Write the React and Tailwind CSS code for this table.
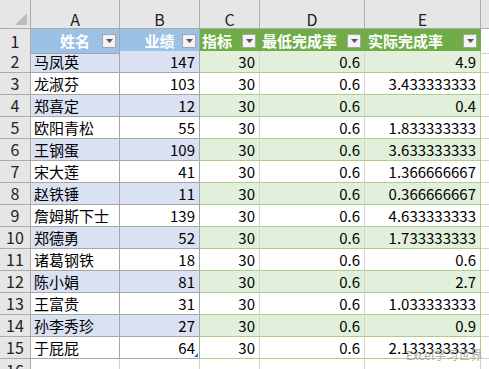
import React from 'react';

const rows = [
  ['马凤英', 147, '4.9'],
  ['龙淑芬', 103, '3.433333333'],
  ['郑喜定', 12, '0.4'],
  ['欧阳青松', 55, '1.833333333'],
  ['王钢蛋', 109, '3.633333333'],
  ['宋大莲', 41, '1.366666667'],
  ['赵铁锤', 11, '0.366666667'],
  ['詹姆斯下士', 139, '4.633333333'],
  ['郑德勇', 52, '1.733333333'],
  ['诸葛钢铁', 18, '0.6'],
  ['陈小娟', 81, '2.7'],
  ['王富贵', 31, '1.033333333'],
  ['孙李秀珍', 27, '0.9'],
  ['于屁屁', 64, '2.133333333'],
];

const cols = 'grid grid-cols-[31px_89px_80px_60px_105px_116px_1fr]';

const FilterBtn = () => (
  <span className="ml-auto mr-[3px] flex h-[14px] w-[14px] shrink-0 items-center justify-center border border-[#a6a6a6] bg-[#f3f3f3]">
    <svg width="7" height="4" viewBox="0 0 7 4">
      <path d="M0 0h7L3.5 4z" fill="#555" />
    </svg>
  </span>
);

const App = () => {
  return (
    <div
      className="relative h-[369px] w-[489px] overflow-hidden bg-white text-[15px] text-black"
      style={{ fontFamily: '"Noto Sans CJK SC", "Liberation Sans", sans-serif' }}
    >
      {/* column letters */}
      <div className={`${cols} h-[29px] bg-[#e6e6e6] text-[16px] text-[#222]`}>
        <div className="flex items-end justify-end border-r border-b border-[#ababab] pb-[3px] pr-[3px]">
          <svg width="12" height="12" viewBox="0 0 12 12">
            <path d="M12 0V12H0z" fill="#bdbdbd" />
          </svg>
        </div>
        {['A', 'B', 'C', 'D', 'E'].map(l => (
          <div key={l} className="flex items-center justify-center border-r border-b border-[#ababab] pt-[10px] leading-[18px]">
            {l}
          </div>
        ))}
        <div className="border-b border-[#ababab]" />
      </div>

      {/* header row 1 */}
      <div className={`${cols} h-[22px] font-bold text-white`}>
        <div className="flex items-center justify-center border-r border-b border-[#ababab] bg-[#e6e6e6] text-[16px] font-normal text-[#222]">1</div>
        <div className="relative flex items-center border-r border-b border-[#a6a6a6] bg-[#9bc2e6]">
          <span className="absolute left-0 right-0 text-center">姓名</span>
          <FilterBtn />
        </div>
        <div className="relative flex items-center border-r border-b border-[#a6a6a6] bg-[#9bc2e6]">
          <span className="absolute left-0 right-0 text-center">业绩</span>
          <FilterBtn />
        </div>
        <div className="flex items-center border-r border-b border-[#70ad47] bg-[#70ad47] pl-[2px]">
          <span>指标</span>
          <FilterBtn />
        </div>
        <div className="flex items-center border-r border-b border-[#70ad47] bg-[#70ad47] pl-[2px]">
          <span>最低完成率</span>
          <FilterBtn />
        </div>
        <div className="flex items-center border-r border-b border-[#70ad47] bg-[#70ad47] pl-[3px]">
          <span>实际完成率</span>
          <FilterBtn />
        </div>
        <div className="border-b border-[#d4d4d4]" />
      </div>

      {/* data rows */}
      {rows.map(([name, score, rate], i) => {
        const even = i % 2 === 0;
        const blue = even ? 'bg-[#d9e1f2]' : 'bg-white';
        const green = even ? 'bg-[#e2efda]' : 'bg-white';
        const last = i === rows.length - 1;
        return (
          <div key={name} className={`${cols} h-[22px] leading-[21px]`}>
            <div className="flex items-center justify-center border-r border-b border-[#ababab] bg-[#e6e6e6] text-[16px] text-[#222]">{i + 2}</div>
            <div className={`border-r border-b border-[#a6a6a6] pl-[3px] ${blue}`}>{name}</div>
            <div className={`relative border-r border-b border-[#a6a6a6] pr-[4px] text-right ${blue}`}>
              {score}
              {last && (
                <svg className="absolute bottom-[1px] right-[1px]" width="4" height="4" viewBox="0 0 4 4">
                  <path d="M4 0V4H0z" fill="#2f6fbf" />
                </svg>
              )}
            </div>
            <div className={`border-r border-b border-r-[#d4d4d4] border-b-[#a9d08e] pr-[4px] text-right ${green}`}>30</div>
            <div className={`border-r border-b border-r-[#d4d4d4] border-b-[#a9d08e] pr-[4px] text-right ${green}`}>0.6</div>
            <div className={`border-r border-b border-r-[#a9d08e] border-b-[#a9d08e] pr-[4px] text-right ${green}`}>{rate}</div>
            <div className="border-b border-[#d4d4d4]" />
          </div>
        );
      })}

      {/* row 16 */}
      <div className={`${cols} h-[22px] leading-[21px]`}>
        <div className="flex items-center justify-center border-r border-[#ababab] bg-[#e6e6e6] text-[16px] text-[#222]">16</div>
        <div className="border-r border-[#d4d4d4]" />
        <div className="border-r border-[#d4d4d4]" />
        <div className="border-r border-[#d4d4d4]" />
        <div className="border-r border-[#d4d4d4]" />
        <div className="border-r border-[#d4d4d4]" />
        <div />
      </div>

      {/* watermark */}
      <div className="absolute left-[406px] top-[348px] text-[12px] leading-[14px] text-[#9a9a9a] opacity-80">
        Excel学习世界
      </div>
    </div>
  );
};

export default App;
